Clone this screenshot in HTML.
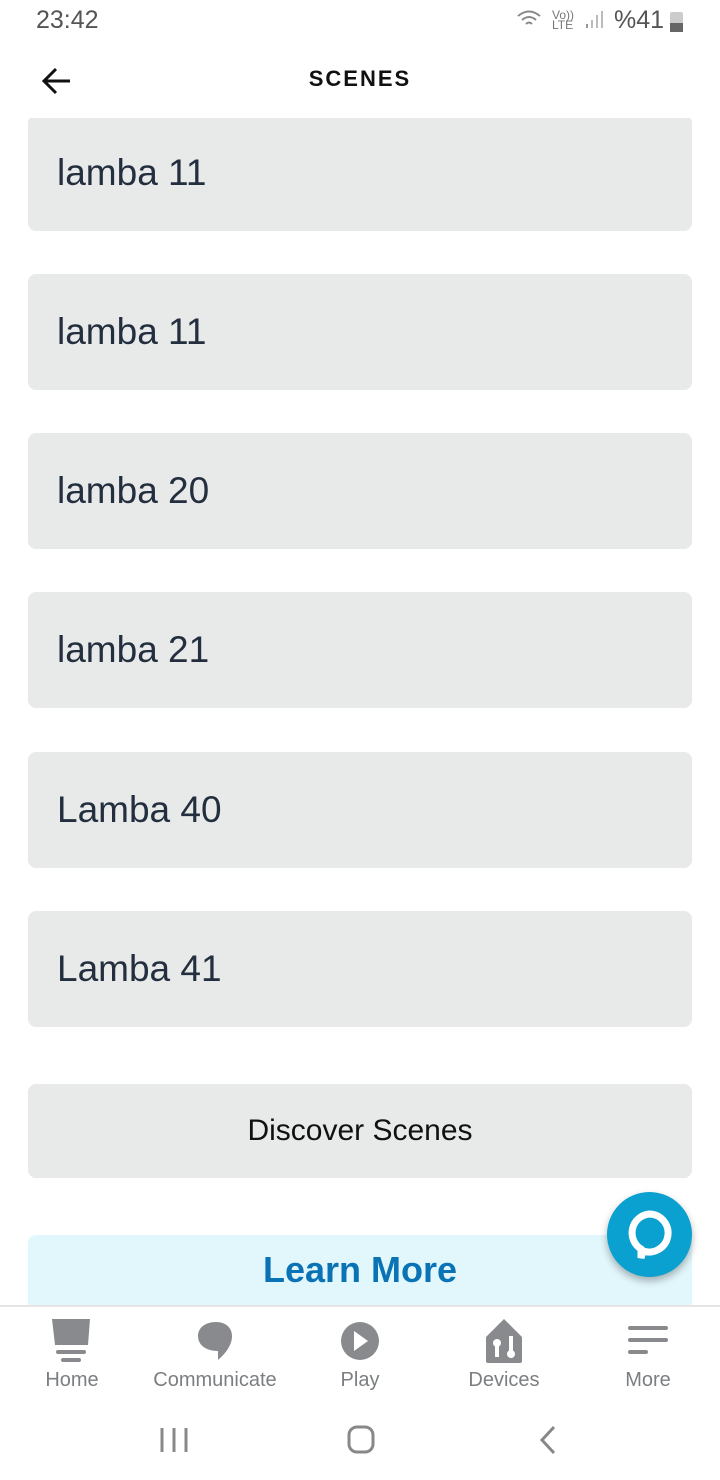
<!DOCTYPE html>
<html><head><meta charset="utf-8"><style>
body{margin:0;width:720px;height:1480px;background:#fff;font-family:"Liberation Sans","DejaVu Sans",sans-serif;position:relative;overflow:hidden}
.abs{position:absolute}
.card{position:absolute;left:28px;width:664px;height:116px;background:#e8e9e9;border-radius:8px;box-sizing:border-box;padding-left:29px;line-height:116px;font-size:37px;color:#232f3e}
.nav{position:absolute;top:1369px;font-size:20px;color:#7b7f82;text-align:center;width:140px}
</style></head><body>
<div class="abs" style="left:36px;top:6px;font-size:25px;color:#555">23:42</div>
<div class="abs" style="left:520px;top:8px;font-size:12px;color:#777;line-height:10px">
<svg width="30" height="22" viewBox="0 0 30 22" style="position:absolute;left:-4px;top:0"><path d="M2 8 Q13 -1 24 8 M6 12 Q13 6 20 12 M10 16 Q13 13 16 16" stroke="#888" stroke-width="2" fill="none"/></svg>
<span style="position:absolute;left:32px;top:2px">Vo))<br>LTE</span>
<svg width="20" height="20" style="position:absolute;left:64px;top:2px"><rect x="2" y="14" width="2" height="4" fill="#999"/><rect x="7" y="10" width="2" height="8" fill="#bbb"/><rect x="12" y="5" width="2" height="13" fill="#bbb"/><rect x="17" y="1" width="2" height="17" fill="#bbb"/></svg>
</div>
<div class="abs" style="left:614px;top:6px;font-size:25px;color:#555">%41</div>
<div class="abs" style="left:670px;top:12px;width:13px;height:20px;background:#ccc;border-radius:2px"><div style="position:absolute;bottom:0;width:13px;height:9px;background:#666"></div></div>
<svg class="abs" style="left:40px;top:66px" width="32" height="30" viewBox="0 0 32 30"><path d="M30 15H4M16 3L4 15l12 12" stroke="#111" stroke-width="3" fill="none"/></svg>
<div class="abs" style="left:0;width:720px;top:66px;text-align:center;font-size:22px;font-weight:bold;letter-spacing:2px;color:#111">SCENES</div>
<div style="position:absolute;top:118px;left:0;width:720px;height:1187px;overflow:hidden">
<div class="card" style="top:-3px">lamba 11</div>
<div class="card" style="top:156px">lamba 11</div>
<div class="card" style="top:315px">lamba 20</div>
<div class="card" style="top:474px">lamba 21</div>
<div class="card" style="top:634px">Lamba 40</div>
<div class="card" style="top:793px">Lamba 41</div>
<div class="card" style="top:966px;height:94px;line-height:94px;padding:0;text-align:center;font-size:30px;color:#111">Discover Scenes</div>
<div class="card" style="top:1117px;height:80px;line-height:70px;padding:0;text-align:center;font-size:36px;font-weight:bold;color:#0a73b5;background:#e2f7fc">Learn More</div>
</div>
<div class="abs" style="left:607px;top:1192px;width:85px;height:85px;border-radius:50%;background:#0aa0d0;box-shadow:0 4px 8px rgba(0,0,0,.3)">
<svg width="85" height="85" viewBox="0 0 85 85"><path d="M42 22a19 19 0 1 1 -6 37l-2 7v-9a19 19 0 0 1 8-35z" stroke="#fff" stroke-width="7" fill="none"/></svg></div>
<div class="abs" style="left:0;top:1305px;width:720px;height:2px;background:#e5e5e5"></div>
<svg class="abs" style="left:50px;top:1318px" width="44" height="46"><path d="M2 1h38l-2 26H5z" fill="#888a8d"/><rect x="6" y="32" width="30" height="4" rx="2" fill="#888a8d"/><rect x="11" y="40" width="20" height="4" rx="2" fill="#888a8d"/></svg>
<svg class="abs" style="left:196px;top:1320px" width="40" height="42"><path d="M20 2c10 0 16 6 16 14 0 9-6 17-14 24v-9C10 31 2 25 2 16 2 8 9 2 20 2z" fill="#888a8d"/></svg>
<svg class="abs" style="left:339px;top:1320px" width="42" height="42"><circle cx="21" cy="21" r="19" fill="#888a8d"/><path d="M15 11l14 10-14 10z" fill="#fff"/></svg>
<svg class="abs" style="left:482px;top:1318px" width="44" height="46"><path d="M22 1l18 18v24a2 2 0 0 1-2 2H6a2 2 0 0 1-2-2V19z" fill="#888a8d"/><circle cx="15" cy="25" r="4" fill="#fff"/><rect x="13" y="27" width="4" height="12" fill="#fff"/><rect x="27" y="18" width="4" height="16" fill="#fff"/><circle cx="29" cy="36" r="4" fill="#fff"/></svg>
<svg class="abs" style="left:626px;top:1324px" width="44" height="34"><rect x="2" y="2" width="40" height="4" rx="2" fill="#888a8d"/><rect x="2" y="14" width="40" height="4" rx="2" fill="#888a8d"/><rect x="2" y="26" width="20" height="4" rx="2" fill="#888a8d"/></svg>
<div class="nav" style="left:2px">Home</div>
<div class="nav" style="left:145px">Communicate</div>
<div class="nav" style="left:290px">Play</div>
<div class="nav" style="left:434px">Devices</div>
<div class="nav" style="left:578px">More</div>
<svg class="abs" style="left:158px;top:1424px" width="34" height="32"><path d="M4 4v24M16 4v24M28 4v24" stroke="#888" stroke-width="3"/></svg>
<svg class="abs" style="left:344px;top:1424px" width="34" height="32"><rect x="5" y="3" width="24" height="25" rx="8" stroke="#888" stroke-width="3" fill="none"/></svg>
<svg class="abs" style="left:536px;top:1424px" width="24" height="32"><path d="M18 3L6 16l12 13" stroke="#888" stroke-width="3" fill="none"/></svg>
</body></html>
